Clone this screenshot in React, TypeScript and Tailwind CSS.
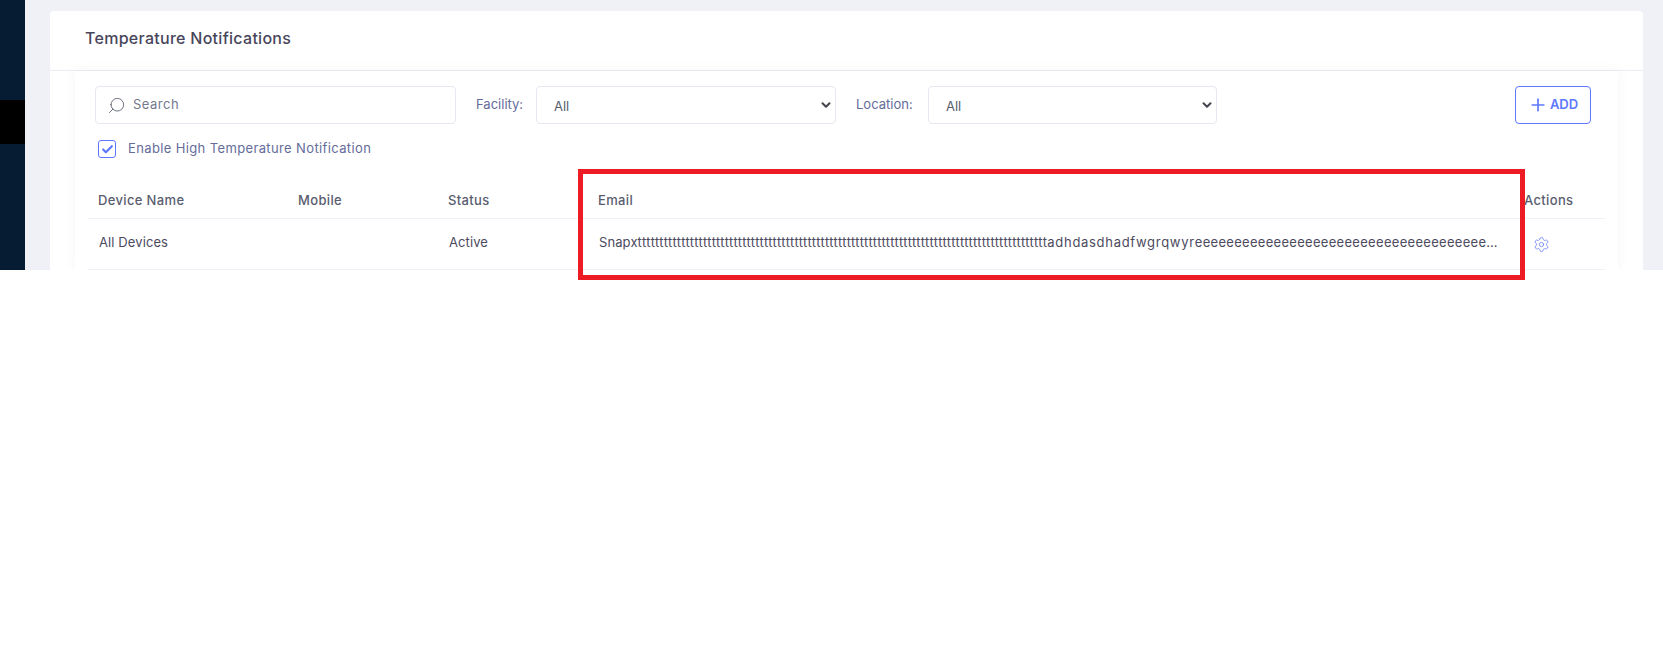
import { Settings, Plus, ChevronDown, Check, Search } from "lucide-react";

const font = "[font-family:Inter,'Liberation_Sans',sans-serif]";

function FakeSelect({ w }: { w: string }) {
  return (
    <div className={`${w} h-[38px] shrink-0 rounded border border-[#e6e7ef] bg-white flex items-center justify-between pl-[17px] pr-[2px] text-[13px] text-[#595d6e]`}>
      <span className="mt-[3px]">All</span>
      <ChevronDown size={14} strokeWidth={3.5} className="text-[#44474f]" />
    </div>
  );
}

export default function App() {
  return (
    <div className={`${font} bg-white min-h-[648px]`}>
      <div className="relative h-[270px] overflow-hidden bg-[#eff1f6] flex">
        <aside className="w-[25px] shrink-0 bg-[#051c33] pt-[100px]">
          <div className="h-[44px] bg-black" />
        </aside>
        <main className="ml-[25px] mr-[20px] mt-[11px] grow rounded-t bg-white">
          <header className="h-[60px] border-b border-[#ebedf2] pl-[35px] pt-[16px]">
            <h1 className="text-[16px] leading-[22px] font-medium text-[#48465b] tracking-[0.28px]">Temperature Notifications</h1>
          </header>
          <section className="mx-[25px] h-[199px] shadow-[0_0_12px_rgba(82,63,105,0.05)] px-[13px] pt-[15px]">
            <div className="flex items-center pl-[7px] pr-[14px]">
              <div className="w-[361px] h-[38px] shrink-0 rounded border border-[#e6e7ef] flex items-center pl-[11px] text-[13px] text-[#74788d]">
                <Search size={19} strokeWidth={1.1} className="-scale-x-100 mr-[7px] text-[#595d6e]" />
                <span className="tracking-[0.5px]">Search</span>
              </div>
              <span className="ml-[20px] w-[60px] text-[13px] text-[#646c9a]">Facility:</span>
              <FakeSelect w="w-[300px]" />
              <span className="ml-[20px] w-[72px] text-[13px] text-[#646c9a]">Location:</span>
              <FakeSelect w="w-[289px]" />
              <button className="ml-auto w-[76px] h-[38px] rounded border border-[#5d78ff] flex items-center justify-center gap-[2px] text-[13px] font-semibold text-[#5d78ff]">
                <Plus size={20} strokeWidth={2} />
                ADD
              </button>
            </div>
            <label className="mt-[16px] ml-[10px] flex items-center h-[18px] text-[13px] text-[#646c9a] tracking-[0.37px]">
              <span className="w-[18px] h-[18px] rounded-[3px] border border-[#5d78ff] flex items-center justify-center mr-[12px]">
                <Check size={13} strokeWidth={4} className="text-[#5d78ff]" />
              </span>
              Enable High Temperature Notification
            </label>
            <table className="mt-[23px] w-[1517px] table-fixed border-collapse text-[13px]">
              <colgroup>
                <col className="w-[200px]" />
                <col className="w-[150px]" />
                <col className="w-[150px]" />
                <col className="w-[927px]" />
                <col />
              </colgroup>
              <thead>
                <tr className="h-[37px] border-b border-[#f0f1f8] text-left text-[#595d6e] tracking-[0.35px]">
                  <th className="pl-[10px] pt-[2px] font-medium">Device Name</th>
                  <th className="pl-[10px] pt-[2px] font-medium">Mobile</th>
                  <th className="pl-[10px] pt-[2px] font-medium">Status</th>
                  <th className="pl-[10px] pt-[2px] font-medium">Email</th>
                  <th className="pl-[9px] pt-[2px] font-medium">Actions</th>
                </tr>
              </thead>
              <tbody>
                <tr className="h-[51px] border-b border-[#f0f1f8] text-[#4c4a5e] tracking-[0.1px]">
                  <td className="pl-[11px] pb-[2px]">All Devices</td>
                  <td />
                  <td className="pl-[11px] pb-[2px]">Active</td>
                  <td className="pl-[11px] pb-[2px] pr-[16px]">
                    <div className="truncate">
                      Snapx
                      <span className="tracking-[0.42px]">{"t".repeat(94)}</span>
                      <span className="tracking-[0.7px]">adhdasdhadfwgrqwyr</span>
                      <span className="tracking-[0.3px]">{"e".repeat(60)}</span>
                    </div>
                  </td>
                  <td className="pl-[10px] pt-[2px]">
                    <Settings size={17} strokeWidth={1.2} className="ml-[8px] text-[#6f86f5]" />
                  </td>
                </tr>
              </tbody>
            </table>
          </section>
        </main>
      </div>
      <div className="absolute left-[578px] top-[169px] w-[947px] h-[111px] border-[5px] border-[#ed1c24] pointer-events-none" />
    </div>
  );
}
